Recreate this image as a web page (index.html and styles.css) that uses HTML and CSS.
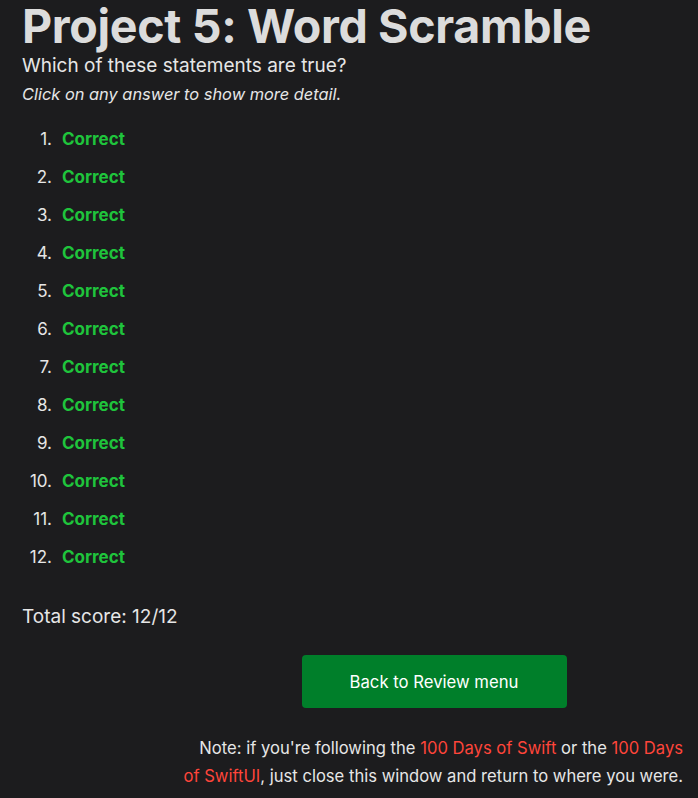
FILE: index.html
```html
<!DOCTYPE html>
<html>
<head>
<meta charset="utf-8">
<link rel="stylesheet" href="styles.css">
</head>
<body>
<main class="page">
  <h1 class="title">Project 5: Word Scramble</h1>
  <p class="question">Which of these statements are true?</p>
  <p class="hint">Click on any answer to show more detail.</p>
  <ol class="answers">
    <li><span class="num">1.</span><span class="ok">Correct</span></li>
    <li><span class="num">2.</span><span class="ok">Correct</span></li>
    <li><span class="num">3.</span><span class="ok">Correct</span></li>
    <li><span class="num">4.</span><span class="ok">Correct</span></li>
    <li><span class="num">5.</span><span class="ok">Correct</span></li>
    <li><span class="num">6.</span><span class="ok">Correct</span></li>
    <li><span class="num">7.</span><span class="ok">Correct</span></li>
    <li><span class="num">8.</span><span class="ok">Correct</span></li>
    <li><span class="num">9.</span><span class="ok">Correct</span></li>
    <li><span class="num">10.</span><span class="ok">Correct</span></li>
    <li><span class="num">11.</span><span class="ok">Correct</span></li>
    <li><span class="num">12.</span><span class="ok">Correct</span></li>
  </ol>
  <p class="score">Total score: 12/12</p>
  <div class="footer">
    <a class="btn" href="#">Back to Review menu</a>
    <p class="note">Note: if you're following the <a href="#">100 Days of Swift</a> or the <a href="#">100 Days of SwiftUI</a>, just close this window and return to where you were.</p>
  </div>
</main>
</body>
</html>
```
FILE: styles.css
```css
html, body {
  margin: 0;
  padding: 0;
  background: #1c1c1e;
}
body {
  font-family: Inter, "Noto Sans", sans-serif;
  color: #e6e6e6;
}
.page {
  padding: 0 15px 0 22px;
}
.title {
  margin: 0;
  font-size: 46.6px;
  font-weight: 700;
  line-height: 52px;
  color: #dcdcdc;
  letter-spacing: -0.35px;
}
.question {
  margin: 1px 0 0;
  font-size: 19px;
  line-height: 26px;
}
.hint {
  margin: 0;
  padding-top: 2px;
  font-size: 16.4px;
  font-style: italic;
  line-height: 26px;
}
.answers {
  list-style: none;
  margin: 21px 0 0;
  padding: 0;
  font-size: 17px;
  line-height: 22px;
}
.answers li {
  display: flex;
  gap: 10px;
  margin-bottom: 16px;
}
.num {
  width: 30px;
  text-align: right;
  color: #e6e6e6;
}
.ok {
  color: #1fc43c;
  font-weight: 700;
}
.score {
  margin: 36px 0 0;
  font-size: 19px;
  line-height: 26px;
}
.footer {
  display: flex;
  flex-direction: column;
  align-items: center;
  width: 500px;
  margin: 25px 0 0 auto;
}
.btn {
  display: flex;
  align-items: center;
  justify-content: center;
  width: 265px;
  height: 53px;
  margin-left: 2px;
  border-radius: 4px;
  background: #007f2a;
  color: #ffffff;
  text-decoration: none;
  font-size: 16.7px;
}
.note {
  align-self: stretch;
  margin: 26px 0 0;
  text-align: right;
  font-size: 16.6px;
  line-height: 28px;
}
.note a {
  color: #ff453a;
  text-decoration: none;
}
```
